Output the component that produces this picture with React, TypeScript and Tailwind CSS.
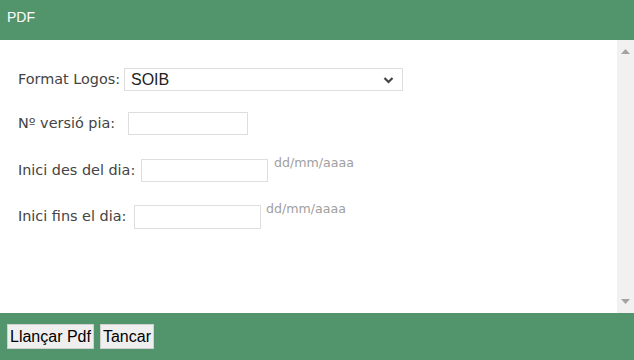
import React from 'react';

const labelFont = { fontFamily: '"DejaVu Sans", Verdana, sans-serif' };

function Row({
  label,
  labelW,
  children,
  className = '',
}: {
  label: string;
  labelW: string;
  children: React.ReactNode;
  className?: string;
}) {
  return (
    <div className={`flex items-center ${className}`}>
      <label className={`${labelW} shrink-0 text-[14.4px] text-[#444] whitespace-nowrap`} style={labelFont}>
        {label}
      </label>
      {children}
    </div>
  );
}

function DateHint({ className = '' }: { className?: string }) {
  return (
    <span
      className={`self-start -mt-[4px] text-[12.6px] leading-[16px] text-[#a0a0a0] ${className}`}
      style={labelFont}
    >
      dd/mm/aaaa
    </span>
  );
}

export default function App() {
  return (
    <div className="w-[634px] h-[360px] flex flex-col bg-white overflow-hidden" style={{ fontFamily: '"Liberation Sans", Arial, sans-serif' }}>
      {/* title bar */}
      <div className="h-[40px] shrink-0 bg-[#52946b] flex items-center pb-[6px] pl-[7px]">
        <span className="text-[14px] text-white">PDF</span>
      </div>

      {/* body */}
      <div className="flex-1 flex min-h-0">
        <div className="flex-1 flex flex-col pl-[18px] pt-[28px]">
          <Row label="Format Logos:" labelW="w-[106px]" className="h-[23px]">
            <div className="w-[279px] h-[23px] border border-[#dedede] flex items-center justify-between pl-[6px] pr-[8px]">
              <span className="text-[16px] text-[#222]">SOIB</span>
              <svg width="11" height="8" viewBox="0 0 11 8">
                <path d="M1.5 2 L5.5 6 L9.5 2" fill="none" stroke="#444" strokeWidth="2.2" />
              </svg>
            </div>
          </Row>

          <Row label="Nº versió pia:" labelW="w-[110px]" className="h-[23px] mt-[21px]">
            <input className="w-[120px] h-[23px] border border-[#dedede] outline-none" />
          </Row>

          <Row label="Inici des del dia:" labelW="w-[123px]" className="h-[23px] mt-[24px]">
            <input className="w-[127px] h-[23px] border border-[#dedede] outline-none" />
            <DateHint className="ml-[6px]" />
          </Row>

          <Row label="Inici fins el dia:" labelW="w-[116px]" className="h-[24px] mt-[23px]">
            <input className="w-[127px] h-[24px] border border-[#dedede] outline-none" />
            <DateHint className="ml-[5px]" />
          </Row>
        </div>

        {/* scrollbar */}
        <div className="w-[17px] shrink-0 bg-[#f1f1f1] flex flex-col justify-between items-center py-[9px]">
          <svg width="9" height="5" viewBox="0 0 9 5">
            <path d="M0 5 L4.5 0 L9 5 Z" fill="#a3a3a3" />
          </svg>
          <svg width="9" height="5" viewBox="0 0 9 5">
            <path d="M0 0 L4.5 5 L9 0 Z" fill="#a3a3a3" />
          </svg>
        </div>
      </div>

      {/* button bar */}
      <div className="h-[47px] shrink-0 bg-[#52946b] flex items-center gap-[6px] pl-[7px]">
        <button className="h-[25px] px-[2px] bg-[#efefef] border border-[#d0d0d0] text-[16px] text-black leading-none">
          Llançar Pdf
        </button>
        <button className="h-[25px] px-[2px] bg-[#efefef] border border-[#d0d0d0] text-[16px] text-black leading-none">
          Tancar
        </button>
      </div>
    </div>
  );
}
